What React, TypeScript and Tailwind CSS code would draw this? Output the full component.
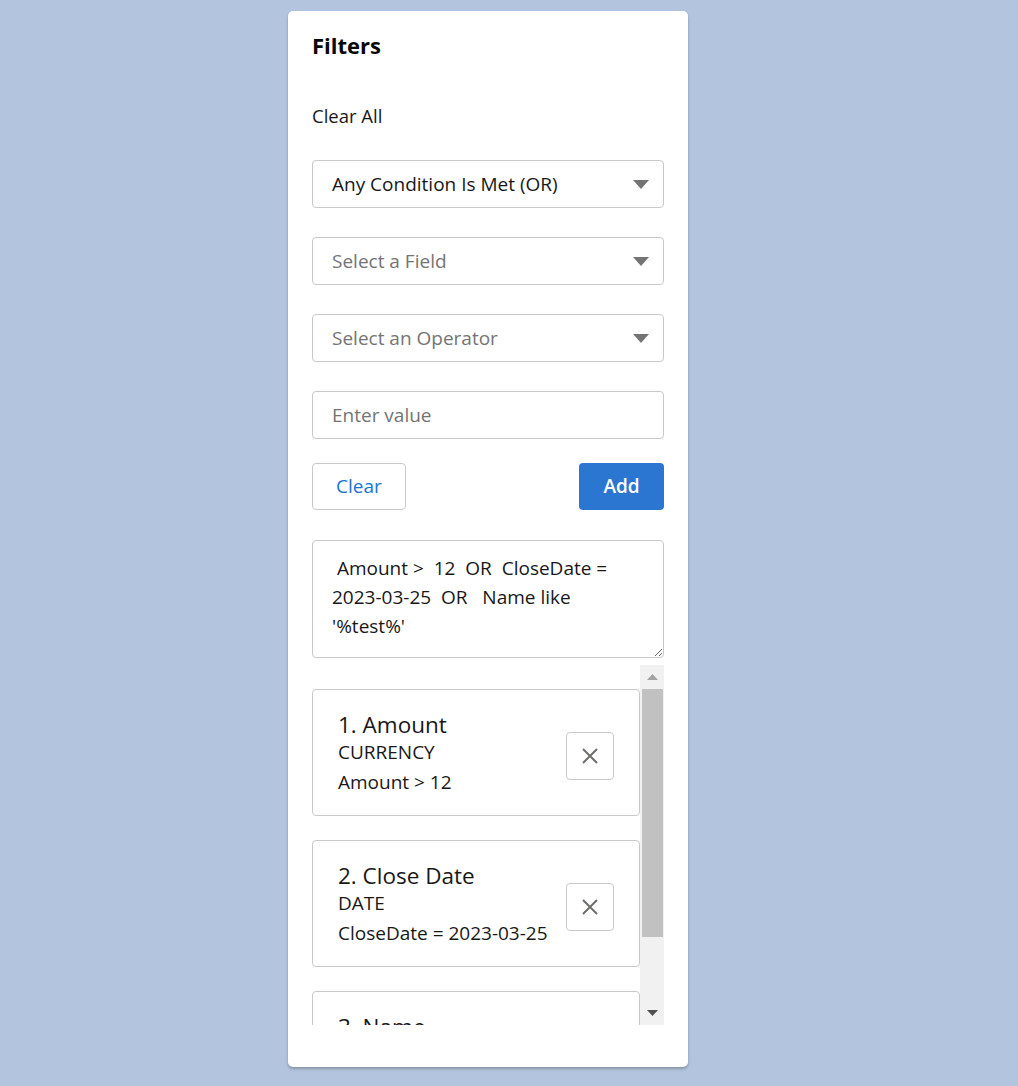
import React, { useState } from 'react';

const font = { fontFamily: '"Open Sans", "Noto Sans", sans-serif' };

const filters = [
  { title: '1. Amount', type: 'CURRENCY', expr: 'Amount > 12' },
  { title: '2. Close Date', type: 'DATE', expr: 'CloseDate = 2023-03-25' },
  { title: '3. Name', type: 'STRING', expr: "Name like '%test%'" },
];

function Caret() {
  return (
    <svg width="16" height="9" viewBox="0 0 16 9" className="shrink-0">
      <path d="M0 0 H16 L8 9 Z" fill="#747474" />
    </svg>
  );
}

function FakeSelect({ label, placeholder }: { label: string; placeholder?: boolean }) {
  return (
    <div className="flex h-[48px] items-center justify-between rounded-[4px] border border-[#c9c9c9] bg-white pl-[19px] pr-[14px]">
      <span className={placeholder ? 'text-[#747474]' : 'text-[#181818]'}>{label}</span>
      <Caret />
    </div>
  );
}

export default function App() {
  const [value, setValue] = useState('');
  const [query, setQuery] = useState(
    " Amount >  12  OR  CloseDate = 2023-03-25  OR   Name like '%test%'"
  );

  return (
    <div className="flex min-h-[1086px] justify-center bg-[#b3c5de] pr-[42px] pt-[11px]" style={font}>
      <div className="flex h-[1056px] w-[400px] flex-col rounded-[5px] bg-white px-[24px] pb-[42px] pt-[20px] text-[19px] text-[#181818] shadow-[0_2px_3px_rgba(0,0,0,0.25)]">
        <h2 className="text-[22px] font-bold leading-[28px] text-[#080707]">Filters</h2>
        <button className="mt-[45px] self-start text-[18.5px] leading-[24px] text-[#181818]">Clear All</button>

        <div className="mt-[32px] flex flex-col gap-[29px]">
          <FakeSelect label="Any Condition Is Met (OR)" />
          <FakeSelect label="Select a Field" placeholder />
          <FakeSelect label="Select an Operator" placeholder />
          <input
            className="h-[48px] rounded-[4px] border border-[#c9c9c9] pl-[19px] text-[19px] outline-none placeholder:text-[#747474]"
            placeholder="Enter value"
            value={value}
            onChange={e => setValue(e.target.value)}
          />
        </div>

        <div className="mt-[24px] flex justify-between">
          <button className="h-[47px] w-[94px] rounded-[4px] border border-[#c9c9c9] bg-white text-[#1b73d6]">Clear</button>
          <button className="h-[47px] w-[85px] rounded-[4px] bg-[#2b76d1] font-semibold text-white">Add</button>
        </div>

        <textarea
          className="mt-[30px] h-[118px] resize-y rounded-[4px] border border-[#c9c9c9] px-[19px] pt-[13px] text-[19px] leading-[29px] text-[#181818] outline-none"
          value={query}
          onChange={e => setQuery(e.target.value)}
        />

        <div className="mt-[7px] flex h-[360px] overflow-hidden">
          <div className="flex flex-1 flex-col gap-[24px] overflow-hidden pt-[24px]">
            {filters.map(f => (
              <div
                key={f.title}
                className="flex shrink-0 items-center justify-between rounded-[4px] border border-[#c9c9c9] py-[21px] pl-[25px] pr-[25px]"
              >
                <div className="flex flex-col">
                  <div className="text-[22.5px] leading-[27px] text-[#181818]">{f.title}</div>
                  <div className="mt-[2px] leading-[24px]">{f.type}</div>
                  <div className="mt-[6px] leading-[24px]">{f.expr}</div>
                </div>
                <button className="mt-[6px] flex h-[48px] w-[48px] items-center justify-center rounded-[4px] border border-[#c9c9c9] bg-white">
                  <svg width="18" height="18" viewBox="0 0 18 18">
                    <path d="M2 2 L16 16 M16 2 L2 16" stroke="#706e6b" strokeWidth="2" />
                  </svg>
                </button>
              </div>
            ))}
          </div>
          <div className="flex w-[24px] flex-col items-center bg-[#f1f1f1]">
            <div className="flex h-[24px] w-full items-center justify-center">
              <svg width="11" height="6" viewBox="0 0 11 6">
                <path d="M0 6 H11 L5.5 0 Z" fill="#a3a3a3" />
              </svg>
            </div>
            <div className="h-[248px] w-[21px] bg-[#c1c1c1]" />
            <div className="flex-1" />
            <div className="flex h-[24px] w-full items-center justify-center">
              <svg width="11" height="6" viewBox="0 0 11 6">
                <path d="M0 0 H11 L5.5 6 Z" fill="#505050" />
              </svg>
            </div>
          </div>
        </div>
      </div>
    </div>
  );
}
